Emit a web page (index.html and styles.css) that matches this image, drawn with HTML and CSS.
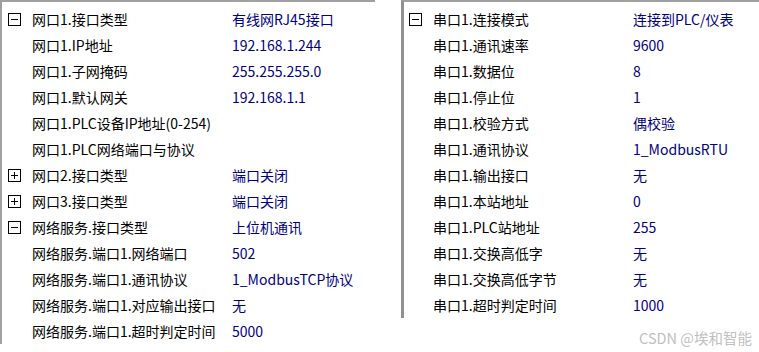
FILE: index.html
```html
<!DOCTYPE html>
<html lang="zh">
<head>
<meta charset="utf-8">
<title>参数设置</title>
<link rel="stylesheet" href="styles.css">
</head>
<body>
<div class="page">
  <div class="panel panel-left">
    <div class="row"><span class="tog"><svg width="13" height="13" viewBox="0 0 13 13"><rect x="0.5" y="0.5" width="12" height="12" fill="#fff" stroke="#000"/><path d="M3 6.5h7" stroke="#000"/></svg></span><span class="lbl">网口1.接口类型</span><span class="val">有线网RJ45接口</span></div>
    <div class="row"><span class="tog"></span><span class="lbl">网口1.IP地址</span><span class="val">192.168.1.244</span></div>
    <div class="row"><span class="tog"></span><span class="lbl">网口1.子网掩码</span><span class="val">255.255.255.0</span></div>
    <div class="row"><span class="tog"></span><span class="lbl">网口1.默认网关</span><span class="val">192.168.1.1</span></div>
    <div class="row"><span class="tog"></span><span class="lbl">网口1.PLC设备IP地址(0-254)</span><span class="val"></span></div>
    <div class="row"><span class="tog"></span><span class="lbl">网口1.PLC网络端口与协议</span><span class="val"></span></div>
    <div class="row"><span class="tog"><svg width="13" height="13" viewBox="0 0 13 13"><rect x="0.5" y="0.5" width="12" height="12" fill="#fff" stroke="#000"/><path d="M3 6.5h7M6.5 3v7" stroke="#000"/></svg></span><span class="lbl">网口2.接口类型</span><span class="val">端口关闭</span></div>
    <div class="row"><span class="tog"><svg width="13" height="13" viewBox="0 0 13 13"><rect x="0.5" y="0.5" width="12" height="12" fill="#fff" stroke="#000"/><path d="M3 6.5h7M6.5 3v7" stroke="#000"/></svg></span><span class="lbl">网口3.接口类型</span><span class="val">端口关闭</span></div>
    <div class="row"><span class="tog"><svg width="13" height="13" viewBox="0 0 13 13"><rect x="0.5" y="0.5" width="12" height="12" fill="#fff" stroke="#000"/><path d="M3 6.5h7" stroke="#000"/></svg></span><span class="lbl">网络服务.接口类型</span><span class="val">上位机通讯</span></div>
    <div class="row"><span class="tog"></span><span class="lbl">网络服务.端口1.网络端口</span><span class="val">502</span></div>
    <div class="row"><span class="tog"></span><span class="lbl">网络服务.端口1.通讯协议</span><span class="val">1_ModbusTCP协议</span></div>
    <div class="row"><span class="tog"></span><span class="lbl">网络服务.端口1.对应输出接口</span><span class="val">无</span></div>
    <div class="row"><span class="tog"></span><span class="lbl">网络服务.端口1.超时判定时间</span><span class="val">5000</span></div>
  </div>
  <div class="panel panel-right">
    <div class="row"><span class="tog"><svg width="13" height="13" viewBox="0 0 13 13"><rect x="0.5" y="0.5" width="12" height="12" fill="#fff" stroke="#000"/><path d="M3 6.5h7" stroke="#000"/></svg></span><span class="lbl">串口1.连接模式</span><span class="val">连接到PLC/仪表</span></div>
    <div class="row"><span class="tog"></span><span class="lbl">串口1.通讯速率</span><span class="val">9600</span></div>
    <div class="row"><span class="tog"></span><span class="lbl">串口1.数据位</span><span class="val">8</span></div>
    <div class="row"><span class="tog"></span><span class="lbl">串口1.停止位</span><span class="val">1</span></div>
    <div class="row"><span class="tog"></span><span class="lbl">串口1.校验方式</span><span class="val">偶校验</span></div>
    <div class="row"><span class="tog"></span><span class="lbl">串口1.通讯协议</span><span class="val">1_ModbusRTU</span></div>
    <div class="row"><span class="tog"></span><span class="lbl">串口1.输出接口</span><span class="val">无</span></div>
    <div class="row"><span class="tog"></span><span class="lbl">串口1.本站地址</span><span class="val">0</span></div>
    <div class="row"><span class="tog"></span><span class="lbl">串口1.PLC站地址</span><span class="val">255</span></div>
    <div class="row"><span class="tog"></span><span class="lbl">串口1.交换高低字</span><span class="val">无</span></div>
    <div class="row"><span class="tog"></span><span class="lbl">串口1.交换高低字节</span><span class="val">无</span></div>
    <div class="row"><span class="tog"></span><span class="lbl">串口1.超时判定时间</span><span class="val">1000</span></div>
  </div>
</div>
<div class="watermark">CSDN @埃和智能</div>
</body>
</html>
```

FILE: styles.css
```css
html, body {
  margin: 0;
  padding: 0;
  background: #fff;
}
body {
  width: 759px;
  height: 352px;
  overflow: hidden;
  position: relative;
  font-family: "Noto Sans CJK SC", "Noto Sans", sans-serif;
  font-size: 14px;
}
.page {
  display: flex;
  align-items: flex-start;
  gap: 26px;
}
.panel {
  display: flex;
  flex-direction: column;
  box-sizing: border-box;
  border-top: 2px solid #a0a0a0;
  padding-top: 4px;
}
.panel-left {
  width: 375px;
  border-left: 2px solid #a0a0a0;
  padding-left: 6px;
}
.panel-right {
  flex: 1;
  border-left: 3px solid #909090;
  padding-left: 5px;
}
.row {
  display: flex;
  align-items: center;
  height: 26px;
  line-height: 26px;
  white-space: nowrap;
}
.tog {
  width: 24px;
  flex: none;
  display: flex;
  align-items: center;
}
.tog svg {
  display: block;
}
.lbl {
  width: 200px;
  flex: none;
  color: #000;
}
.val {
  color: #000080;
}
.watermark {
  position: absolute;
  right: 7px;
  bottom: 5px;
  color: #c0c0c0;
  font-size: 14.5px;
  line-height: 18px;
}
```
